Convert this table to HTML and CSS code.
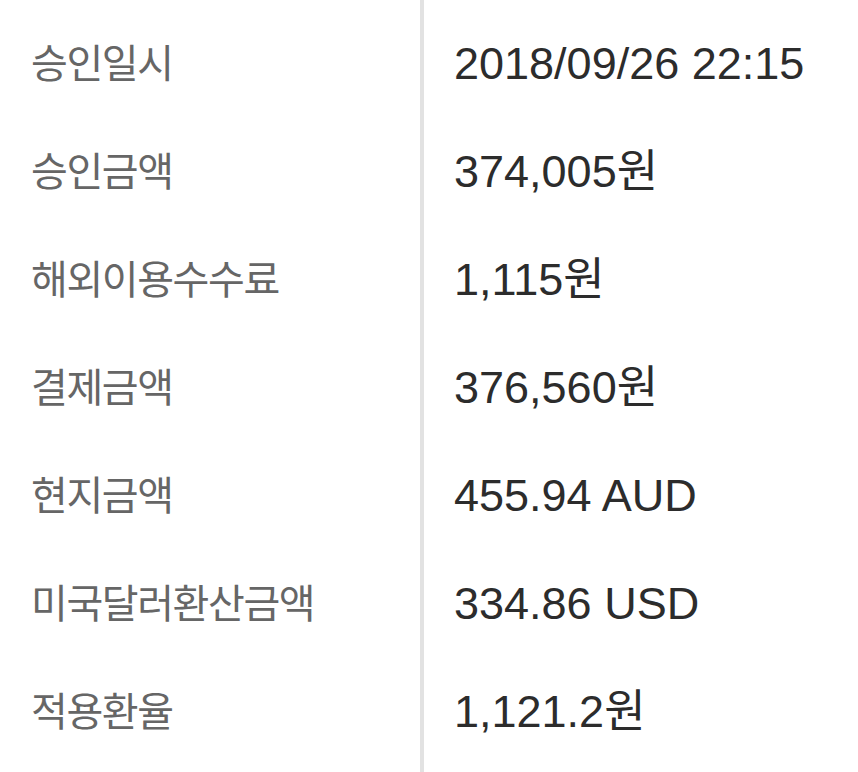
FILE: index.html
```html
<!DOCTYPE html>
<html lang="ko">
<head>
<meta charset="utf-8">
<link rel="stylesheet" href="styles.css">
</head>
<body>
<div class="table">
  <div class="col labels">
    <div class="cell">승인일시</div>
    <div class="cell">승인금액</div>
    <div class="cell">해외이용수수료</div>
    <div class="cell">결제금액</div>
    <div class="cell">현지금액</div>
    <div class="cell">미국달러환산금액</div>
    <div class="cell">적용환율</div>
  </div>
  <div class="divider"></div>
  <div class="col values">
    <div class="cell">2018/09/26 22:15</div>
    <div class="cell">374,005원</div>
    <div class="cell">1,115원</div>
    <div class="cell">376,560원</div>
    <div class="cell">455.94 AUD</div>
    <div class="cell">334.86 USD</div>
    <div class="cell">1,121.2원</div>
  </div>
</div>
</body>
</html>
```
FILE: styles.css
```css
html, body {
  margin: 0;
  padding: 0;
  background: #ffffff;
}
.table {
  display: flex;
  height: 772px;
}
.col {
  display: flex;
  flex-direction: column;
  padding-top: 11px;
}
.labels {
  width: 420px;
  box-sizing: border-box;
  padding-left: 31px;
}
.divider {
  width: 4px;
  background: #e2e2e2;
}
.values {
  padding-left: 30px;
}
.cell {
  height: 108px;
  box-sizing: border-box;
  display: flex;
  align-items: center;
  white-space: nowrap;
}
.labels .cell {
  font-family: "Noto Sans CJK KR", sans-serif;
  font-size: 40px;
  color: #666666;
  letter-spacing: -1.4px;
  padding-bottom: 8px;
}
.values .cell {
  font-family: "Liberation Sans", "Noto Sans CJK KR", sans-serif;
  font-size: 45px;
  line-height: 1;
  color: #2c2c2c;
  padding-bottom: 4px;
}
```
